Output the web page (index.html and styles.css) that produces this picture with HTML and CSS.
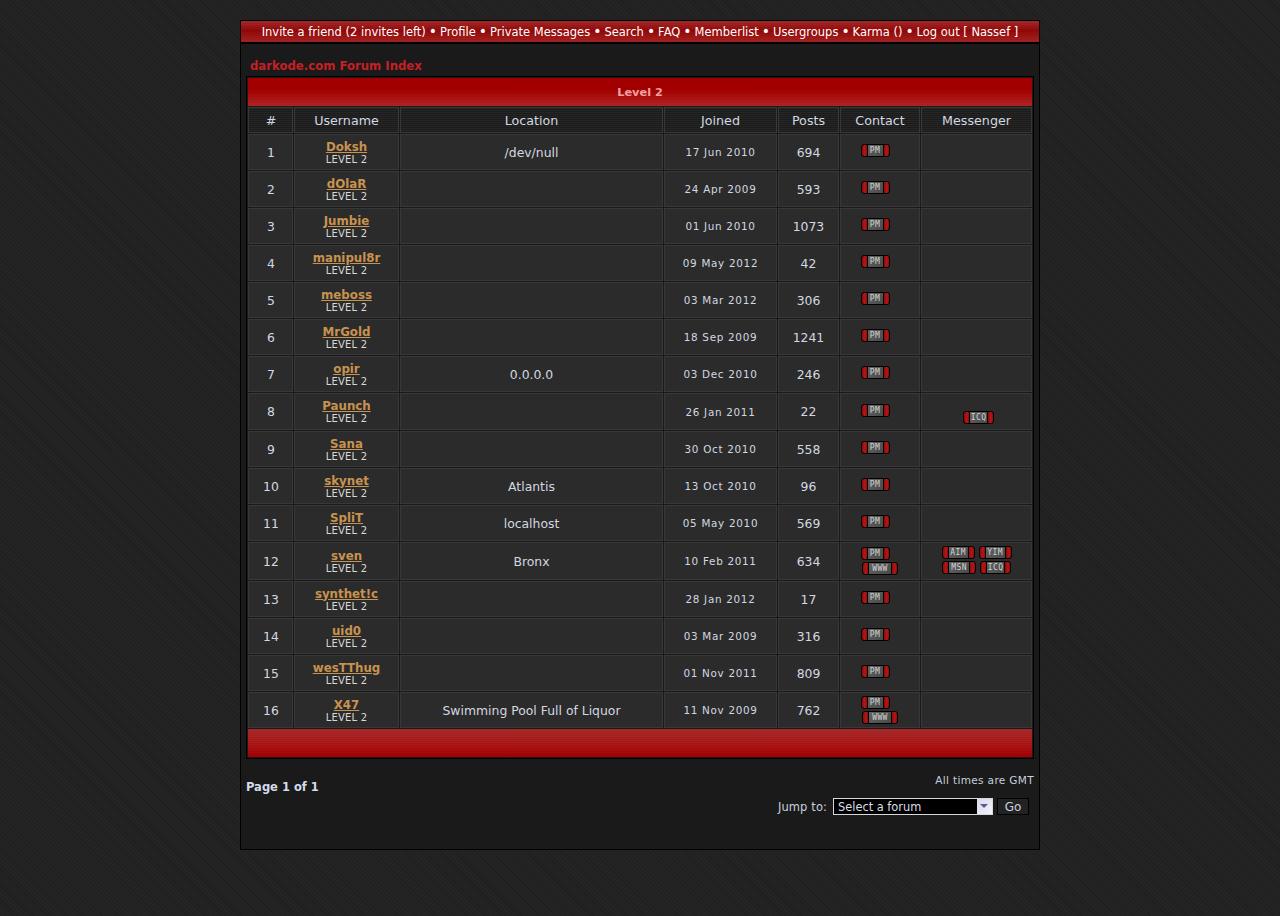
FILE: index.html
```html
<!DOCTYPE html>
<html lang="en">
<head>
<meta charset="utf-8">
<title>darkode.com :: Level 2</title>
<link rel="stylesheet" href="styles.css">
</head>
<body>
<div class="wrap">
  <nav class="topnav">
    <a href="#">Invite a friend (2 invites left)</a> <span class="sep">•</span> <a href="#">Profile</a> <span class="sep">•</span> <a href="#">Private Messages</a> <span class="sep">•</span> <a href="#">Search</a> <span class="sep">•</span> <a href="#">FAQ</a> <span class="sep">•</span> <a href="#">Memberlist</a> <span class="sep">•</span> <a href="#">Usergroups</a> <span class="sep">•</span> <a href="#">Karma ()</a> <span class="sep">•</span> <a href="#">Log out [ Nassef ]</a>
  </nav>
  <main class="content">
    <a class="crumb" href="#">darkode.com Forum Index</a>
    <table class="members">
      <colgroup>
        <col class="c1"><col class="c2"><col class="c3"><col class="c4"><col class="c5"><col class="c6"><col class="c7">
      </colgroup>
      <thead>
        <tr><td colspan="7" class="band band-top">Level 2</td></tr>
        <tr><th>#</th><th>Username</th><th>Location</th><th>Joined</th><th>Posts</th><th>Contact</th><th>Messenger</th></tr>
      </thead>
      <tbody>
        <tr><td>1</td><td class="user"><a href="#">Doksh</a><span>LEVEL 2</span></td><td>/dev/null</td><td class="date">17 Jun 2010</td><td>694</td><td class="contact"><a class="btn btn-pm" href="#">PM</a></td><td></td></tr>
        <tr><td>2</td><td class="user"><a href="#">dOlaR</a><span>LEVEL 2</span></td><td></td><td class="date">24 Apr 2009</td><td>593</td><td class="contact"><a class="btn btn-pm" href="#">PM</a></td><td></td></tr>
        <tr><td>3</td><td class="user"><a href="#">Jumbie</a><span>LEVEL 2</span></td><td></td><td class="date">01 Jun 2010</td><td>1073</td><td class="contact"><a class="btn btn-pm" href="#">PM</a></td><td></td></tr>
        <tr><td>4</td><td class="user"><a href="#">manipul8r</a><span>LEVEL 2</span></td><td></td><td class="date">09 May 2012</td><td>42</td><td class="contact"><a class="btn btn-pm" href="#">PM</a></td><td></td></tr>
        <tr><td>5</td><td class="user"><a href="#">meboss</a><span>LEVEL 2</span></td><td></td><td class="date">03 Mar 2012</td><td>306</td><td class="contact"><a class="btn btn-pm" href="#">PM</a></td><td></td></tr>
        <tr><td>6</td><td class="user"><a href="#">MrGold</a><span>LEVEL 2</span></td><td></td><td class="date">18 Sep 2009</td><td>1241</td><td class="contact"><a class="btn btn-pm" href="#">PM</a></td><td></td></tr>
        <tr><td>7</td><td class="user"><a href="#">opir</a><span>LEVEL 2</span></td><td>0.0.0.0</td><td class="date">03 Dec 2010</td><td>246</td><td class="contact"><a class="btn btn-pm" href="#">PM</a></td><td></td></tr>
        <tr class="r37"><td>8</td><td class="user"><a href="#">Paunch</a><span>LEVEL 2</span></td><td></td><td class="date">26 Jan 2011</td><td>22</td><td class="contact"><a class="btn btn-pm" href="#">PM</a></td><td class="messenger low"><a class="btn btn-icq" href="#">ICQ</a></td></tr>
        <tr><td>9</td><td class="user"><a href="#">Sana</a><span>LEVEL 2</span></td><td></td><td class="date">30 Oct 2010</td><td>558</td><td class="contact"><a class="btn btn-pm" href="#">PM</a></td><td></td></tr>
        <tr><td>10</td><td class="user"><a href="#">skynet</a><span>LEVEL 2</span></td><td>Atlantis</td><td class="date">13 Oct 2010</td><td>96</td><td class="contact"><a class="btn btn-pm" href="#">PM</a></td><td></td></tr>
        <tr><td>11</td><td class="user"><a href="#">SpliT</a><span>LEVEL 2</span></td><td>localhost</td><td class="date">05 May 2010</td><td>569</td><td class="contact"><a class="btn btn-pm" href="#">PM</a></td><td></td></tr>
        <tr class="r38"><td>12</td><td class="user"><a href="#">sven</a><span>LEVEL 2</span></td><td>Bronx</td><td class="date">10 Feb 2011</td><td>634</td><td class="contact"><a class="btn btn-pm" href="#">PM</a><a class="btn btn-www" href="#">WWW</a></td><td class="messenger"><div class="btn-row"><a class="btn btn-aim" href="#">AIM</a><a class="btn btn-aim" href="#">YIM</a></div><div class="btn-row"><a class="btn btn-msn" href="#">MSN</a><a class="btn btn-icq" href="#">ICQ</a></div></td></tr>
        <tr><td>13</td><td class="user"><a href="#">synthet!c</a><span>LEVEL 2</span></td><td></td><td class="date">28 Jan 2012</td><td>17</td><td class="contact"><a class="btn btn-pm" href="#">PM</a></td><td></td></tr>
        <tr><td>14</td><td class="user"><a href="#">uid0</a><span>LEVEL 2</span></td><td></td><td class="date">03 Mar 2009</td><td>316</td><td class="contact"><a class="btn btn-pm" href="#">PM</a></td><td></td></tr>
        <tr><td>15</td><td class="user"><a href="#">wesTThug</a><span>LEVEL 2</span></td><td></td><td class="date">01 Nov 2011</td><td>809</td><td class="contact"><a class="btn btn-pm" href="#">PM</a></td><td></td></tr>
        <tr><td>16</td><td class="user"><a href="#">X47</a><span>LEVEL 2</span></td><td>Swimming Pool Full of Liquor</td><td class="date">11 Nov 2009</td><td>762</td><td class="contact"><a class="btn btn-pm" href="#">PM</a><a class="btn btn-www" href="#">WWW</a></td><td></td></tr>
      </tbody>
      <tfoot>
        <tr><td colspan="7" class="band band-bottom"></td></tr>
      </tfoot>
    </table>
    <div class="foot">
      <strong class="pages">Page 1 of 1</strong>
      <div class="foot-right">
        <div class="tz">All times are GMT</div>
        <form class="jump">
          <label for="jumpbox">Jump to:</label>
          <span class="select-wrap">
            <select id="jumpbox"><option>Select a forum</option></select>
            <span class="arrow"></span>
          </span>
          <button type="button" class="go">Go</button>
        </form>
      </div>
    </div>
  </main>
</div>
</body>
</html>
```

FILE: styles.css
```css
* { box-sizing: border-box; }
html, body { margin: 0; height: 100%; }
body {
  padding-top: 20px;
  background-color: #222;
  background-image: repeating-linear-gradient(45deg, #1f1f1f 0 1px, #242424 1px 3px);
  font-family: "DejaVu Sans", Verdana, sans-serif;
  color: #d3d8e0;
}
a { color: inherit; text-decoration: none; }

.wrap {
  width: 800px;
  height: 830px;
  margin: 0 auto;
  background: #1a1a1a;
  border: 1px solid #000;
}

.topnav {
  height: 23px;
  border-bottom: 2px solid #000;
  text-align: center;
  font-size: 11.5px;
  line-height: 22px;
  color: #fff;
  background-image:
    repeating-linear-gradient(180deg, rgba(0,0,0,.08) 0 1px, transparent 1px 2px),
    linear-gradient(180deg, #a82c2c 0, #980808 45%, #a82424 100%);
}
.sep {
  margin: 0 -.7px;
  font-size: 14px;
  line-height: 0;
}

.content { padding: 15px 5px 0; }

.crumb {
  display: block;
  height: 17px;
  margin-left: 4px;
  font-size: 11.7px;
  font-weight: bold;
  line-height: 14px;
  color: #c62026;
}

.members {
  table-layout: fixed;
  width: 788px;
  border: 1px solid #000;
  border-spacing: 1px;
  border-collapse: separate;
}
.c1 { width: 45px; }
.c2 { width: 105px; }
.c3 { width: 263px; }
.c4 { width: 113px; }
.c5 { width: 61px; }
.c6 { width: 80px; }
.c7 { width: 111px; }

.members td, .members th {
  padding: 0;
  text-align: center;
  vertical-align: middle;
  font-size: 12.4px;
  font-weight: normal;
  border: 1px solid #383838;
}
.members td {
  height: 36px;
  background: #2b2b2b;
}
.members tbody td:first-child, .members th:first-child { padding-left: 1px; }
.members th {
  height: 26px;
  font-size: 12.7px;
  background: repeating-linear-gradient(180deg, #262626 0 1px, #1b1b1b 1px 2px);
}
.members tr.r37 td { height: 37px; }
.members tr.r38 td { height: 38px; }

.members td.band {
  height: 28px;
  border: 0;
  font-size: 11.3px;
  font-weight: bold;
  color: #f4a0a0;
}
.members td.band-top {
  background-image:
    repeating-linear-gradient(180deg, rgba(0,0,0,.07) 0 1px, transparent 1px 2px),
    linear-gradient(180deg, #a80000 0, #a80000 40%, #b52424 100%);
}
.members td.band-bottom {
  background-image:
    repeating-linear-gradient(180deg, rgba(0,0,0,.07) 0 1px, transparent 1px 2px),
    linear-gradient(180deg, #ac2a2a 0, #b01a1a 50%, #a80000 100%);
}

.members td.user { padding-top: 2px; line-height: 12px; }
.user a {
  display: block;
  width: max-content;
  margin: 0 auto;
  font-size: 11.8px;
  font-weight: bold;
  line-height: 13px;
  color: #c8924f;
  text-decoration: underline;
}
.user span {
  display: block;
  font-size: 10px;
  letter-spacing: .2px;
  line-height: 12px;
  color: #d8d8d8;
}
.members td.date { font-size: 10.4px; letter-spacing: .7px; }

.members td.contact, .members td.messenger {
  font-size: 0;
  line-height: 0;
}
.members td.contact .btn { display: flex; margin: 0 auto 2px; }
.members td.contact .btn:last-child { margin-bottom: 0; }
.members td.contact .btn:only-child { margin-bottom: 3px; }
.members td.contact .btn-pm { transform: translateX(-5px); }
.members td.messenger.low { padding: 12px 0 0 4px; }
.btn-row {
  display: flex;
  justify-content: center;
  gap: 4px;
  margin-bottom: 2px;
}

.btn {
  display: inline-flex;
  align-items: center;
  justify-content: center;
  height: 13px;
  border: 1px solid #000;
  border-radius: 3px;
  font-family: "DejaVu Sans Mono", monospace;
  font-size: 8px;
  line-height: 11px;
  letter-spacing: .4px;
  color: #d2d2d2;
  background:
    linear-gradient(90deg, #8a0a0a, #b81818 60%, #8a0a0a) left / 5px 100% no-repeat,
    linear-gradient(90deg, #8a0a0a, #b81818 60%, #8a0a0a) right / 5px 100% no-repeat,
    linear-gradient(#000, #000) 5px 0 / 1px 100% no-repeat,
    linear-gradient(#000, #000) calc(100% - 5px) 0 / 1px 100% no-repeat,
    linear-gradient(135deg, #686868, #444);
}
.btn-pm { width: 29px; }
.btn-icq { width: 31px; }
.btn-aim { width: 33px; }
.btn-msn { width: 34px; }
.btn-www { width: 36px; }

.foot {
  display: flex;
  justify-content: space-between;
  margin: 14px 0 0;
  width: 788px;
}
.pages {
  margin-top: 7px;
  font-size: 11.5px;
  line-height: 14px;
  color: #d3dcec;
}
.foot-right {
  display: flex;
  flex-direction: column;
  align-items: flex-end;
}
.tz {
  font-size: 10.5px;
  letter-spacing: .35px;
  line-height: 14px;
  color: #c8d0dc;
}
.jump {
  display: flex;
  align-items: center;
  gap: 4px;
  margin: 11px 5px 0 0;
  font-size: 11.5px;
  letter-spacing: .1px;
  color: #c8d0dc;
}
.jump label { margin-right: 2px; }
.select-wrap { position: relative; display: block; width: 160px; height: 17px; }
.select-wrap select {
  appearance: none;
  display: block;
  width: 100%;
  height: 100%;
  padding: 0 0 0 4px;
  border: 1px solid #d8d8d8;
  border-radius: 0;
  background: #000;
  color: #d8dce4;
  font: 11.4px "DejaVu Sans", sans-serif;
}
.arrow {
  position: absolute;
  top: 1px;
  right: 1px;
  width: 15px;
  height: 15px;
  background: linear-gradient(135deg, #d8d8ea, #f4f4fa);
}
.arrow::after {
  content: "";
  position: absolute;
  left: 3px;
  top: 5px;
  border: 4px solid transparent;
  border-top: 4px solid #5a5a98;
  border-bottom: 0;
}
.go {
  width: 32px;
  height: 17px;
  padding: 0;
  border: 1px solid #000;
  background: #222;
  color: #c8d0dc;
  font: 12px "DejaVu Sans", sans-serif;
}
```
